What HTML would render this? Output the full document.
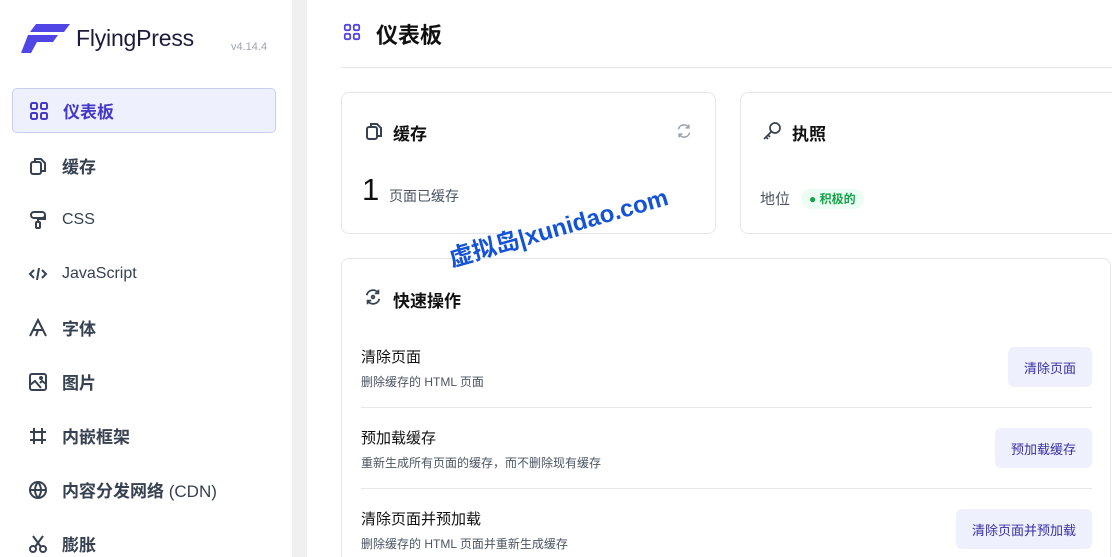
<!DOCTYPE html>
<html style="width:1112px;height:557px;overflow:hidden"><head><meta charset="utf-8"><style>
*{box-sizing:border-box;margin:0;padding:0}
body{width:1112px;height:557px;overflow:hidden;background:#fff;font-family:"Liberation Sans","Noto Sans CJK SC",sans-serif;color:#1f2937;position:relative}
.side{position:absolute;left:0;top:0;width:292px;height:557px;background:#fff}
.strip{position:absolute;left:292px;top:0;width:15px;height:557px;background:#f0f0f1}
.logo{position:absolute;left:20px;top:22px;display:flex;align-items:center}
.logo span{font-size:23px;color:#1e1b3a;margin-left:6px;letter-spacing:-0.2px}
.ver{position:absolute;left:231px;top:41px;font-size:11px;color:#9ca3af}
.nav{position:absolute;left:12px;width:264px;height:45px;display:flex;align-items:center;font-size:17px;font-weight:bold;color:#374151}
.nav svg{position:absolute;left:16px}
.nav .t{position:absolute;left:50px}
.act{background:#eef0fd;border:1px solid #c9cdee;border-radius:5px;color:#4338ca}
.h1{position:absolute;left:376px;top:18px;font-size:22px;font-weight:bold;color:#111}
.hr{position:absolute;left:341px;top:67px;width:771px;height:1px;background:#e5e7eb}
.card{position:absolute;border:1px solid #e5e7eb;border-radius:8px;background:#fff}
.ct{position:absolute;font-size:17px;font-weight:bold;color:#111}
.row{position:absolute;left:361px;width:731px}
.row .a{font-size:15px;color:#111}
.row .b{font-size:12px;color:#4b5563;margin-top:6px}
.btn{position:absolute;right:0;background:#eef0fd;border-radius:6px;height:40px;font-size:13px;color:#3730a3;display:flex;align-items:center;padding:0 16px}
.sep{position:absolute;left:361px;width:731px;height:1px;background:#e5e7eb}
.wm{position:absolute;left:444px;top:240px;transform:rotate(-16deg);transform-origin:left top;font-size:24px;font-weight:bold;color:#1553d6;white-space:nowrap}
</style></head><body>
<div class="side"></div><div class="strip"></div>
<div class="logo"><svg width="50" height="32" viewBox="0 0 50 32"><path d="M16 2H50L44 10H10Z" fill="#4f46e5"/><path d="M8 13H38L33 20H17L11 31H1Z" fill="#4f46e5"/></svg><span>FlyingPress</span></div>
<div class="ver">v4.14.4</div>

<div class="nav act" style="top:88px"><svg width="20" height="20" viewBox="0 0 20 20" fill="none" stroke="#4338ca" stroke-width="2"><rect x="2" y="2" width="6" height="6" rx="1.5"/><rect x="12" y="2" width="6" height="6" rx="1.5"/><rect x="2" y="12" width="6" height="6" rx="1.5"/><rect x="12" y="12" width="6" height="6" rx="1.5"/></svg><span class="t">仪表板</span></div>
<div class="nav" style="top:143px"><svg width="20" height="20" viewBox="0 0 20 20" fill="none" stroke="#374151" stroke-width="2"><path d="M7 5V3h6l4 4v8h-3"/><rect x="3" y="6" width="10" height="12" rx="2"/></svg><span class="t">缓存</span></div>
<div class="nav" style="top:197px"><svg width="20" height="20" viewBox="0 0 20 20" fill="none" stroke="#374151" stroke-width="2"><rect x="3" y="2" width="14" height="6" rx="3"/><path d="M17 5v4H10v3"/><rect x="8" y="12" width="4" height="6" rx="1"/></svg><span class="t" style="font-weight:normal;font-size:16px">CSS</span></div>
<div class="nav" style="top:251px"><svg width="20" height="20" viewBox="0 0 20 20" fill="none" stroke="#374151" stroke-width="2"><path d="M6 6l-4 4 4 4M14 6l4 4-4 4M11 4l-2 12"/></svg><span class="t" style="font-weight:normal;font-size:16px">JavaScript</span></div>
<div class="nav" style="top:305px"><svg width="20" height="20" viewBox="0 0 20 20" fill="none" stroke="#374151" stroke-width="2"><path d="M2 18L10 2l8 16M5 12h10M8 18l2-6"/></svg><span class="t">字体</span></div>
<div class="nav" style="top:359px"><svg width="20" height="20" viewBox="0 0 20 20" fill="none" stroke="#374151" stroke-width="2"><rect x="2" y="2" width="16" height="16" rx="2"/><path d="M2 13l5-4 6 7M12 11l2-2 4 3"/><circle cx="13" cy="6" r="1"/></svg><span class="t">图片</span></div>
<div class="nav" style="top:413px"><svg width="20" height="20" viewBox="0 0 20 20" fill="none" stroke="#374151" stroke-width="2"><path d="M6 2v16M14 2v16M2 6h16M2 14h16"/></svg><span class="t">内嵌框架</span></div>
<div class="nav" style="top:467px"><svg width="20" height="20" viewBox="0 0 20 20" fill="none" stroke="#374151" stroke-width="2"><circle cx="10" cy="10" r="8"/><path d="M2 10h16M10 2c-4 5-4 11 0 16M10 2c4 5 4 11 0 16"/></svg><span class="t">内容分发网络 <span style="font-weight:normal">(CDN)</span></span></div>
<div class="nav" style="top:521px"><svg width="20" height="20" viewBox="0 0 20 20" fill="none" stroke="#374151" stroke-width="2"><circle cx="5" cy="15" r="3"/><circle cx="15" cy="15" r="3"/><path d="M7 13L15 2M13 13L5 2"/></svg><span class="t">膨胀</span></div>

<svg style="position:absolute;left:343px;top:23px" width="18" height="18" viewBox="0 0 20 20" fill="none" stroke="#4f46e5" stroke-width="2"><rect x="2" y="2" width="6" height="6" rx="1.5"/><rect x="12" y="2" width="6" height="6" rx="1.5"/><rect x="2" y="12" width="6" height="6" rx="1.5"/><rect x="12" y="12" width="6" height="6" rx="1.5"/></svg>
<div class="h1">仪表板</div>
<div class="hr"></div>

<div class="card" style="left:341px;top:92px;width:375px;height:142px"></div>
<svg style="position:absolute;left:364px;top:121px" width="20" height="20" viewBox="0 0 20 20" fill="none" stroke="#374151" stroke-width="2"><path d="M7 5V3h6l4 4v8h-3"/><rect x="3" y="6" width="10" height="12" rx="2"/></svg>
<div class="ct" style="left:393px;top:120px">缓存</div>
<svg style="position:absolute;left:676px;top:123px" width="16" height="16" viewBox="0 0 20 20" fill="none" stroke="#9ca3af" stroke-width="2"><path d="M3 8a7 7 0 0 1 13-2M17 12a7 7 0 0 1-13 2M16 2v4h-4M4 18v-4h4"/></svg>
<div style="position:absolute;left:362px;top:172px;font-size:31px;color:#111">1</div>
<div style="position:absolute;left:389px;top:186px;font-size:14px;color:#4b5563">页面已缓存</div>

<div class="card" style="left:740px;top:92px;width:390px;height:142px"></div>
<svg style="position:absolute;left:762px;top:121px" width="20" height="20" viewBox="0 0 20 20" fill="none" stroke="#374151" stroke-width="1.7"><circle cx="13" cy="7" r="5"/><path d="M9.5 10.5L2 18M4 16l2 2M6 14l2 2"/></svg>
<div class="ct" style="left:792px;top:120px">执照</div>
<div style="position:absolute;left:760px;top:188px;font-size:15px;color:#4b5563">地位</div>
<div style="position:absolute;left:801px;top:189px;height:20px;padding:0 8px;background:#ecfdf3;border-radius:10px;font-size:12px;font-weight:bold;color:#16a34a;line-height:20px">● 积极的</div>

<div class="card" style="left:341px;top:258px;width:770px;height:320px"></div>
<svg style="position:absolute;left:364px;top:288px" width="18" height="18" viewBox="0 0 20 20" fill="none" stroke="#374151" stroke-width="2"><path d="M3 8a7 7 0 0 1 13-2M17 12a7 7 0 0 1-13 2M16 2v4h-4M4 18v-4h4"/><circle cx="10" cy="10" r="1.5"/></svg>
<div class="ct" style="left:393px;top:287px">快速操作</div>

<div class="row" style="top:346px"><div class="a">清除页面</div><div class="b">删除缓存的 HTML 页面</div><div class="btn" style="top:1px">清除页面</div></div>
<div class="sep" style="top:407px"></div>
<div class="row" style="top:427px"><div class="a">预加载缓存</div><div class="b">重新生成所有页面的缓存，而不删除现有缓存</div><div class="btn" style="top:1px">预加载缓存</div></div>
<div class="sep" style="top:488px"></div>
<div class="row" style="top:508px"><div class="a">清除页面并预加载</div><div class="b">删除缓存的 HTML 页面并重新生成缓存</div><div class="btn" style="top:1px">清除页面并预加载</div></div>

<div class="wm">虚拟岛|xunidao.com</div>
</body></html>
